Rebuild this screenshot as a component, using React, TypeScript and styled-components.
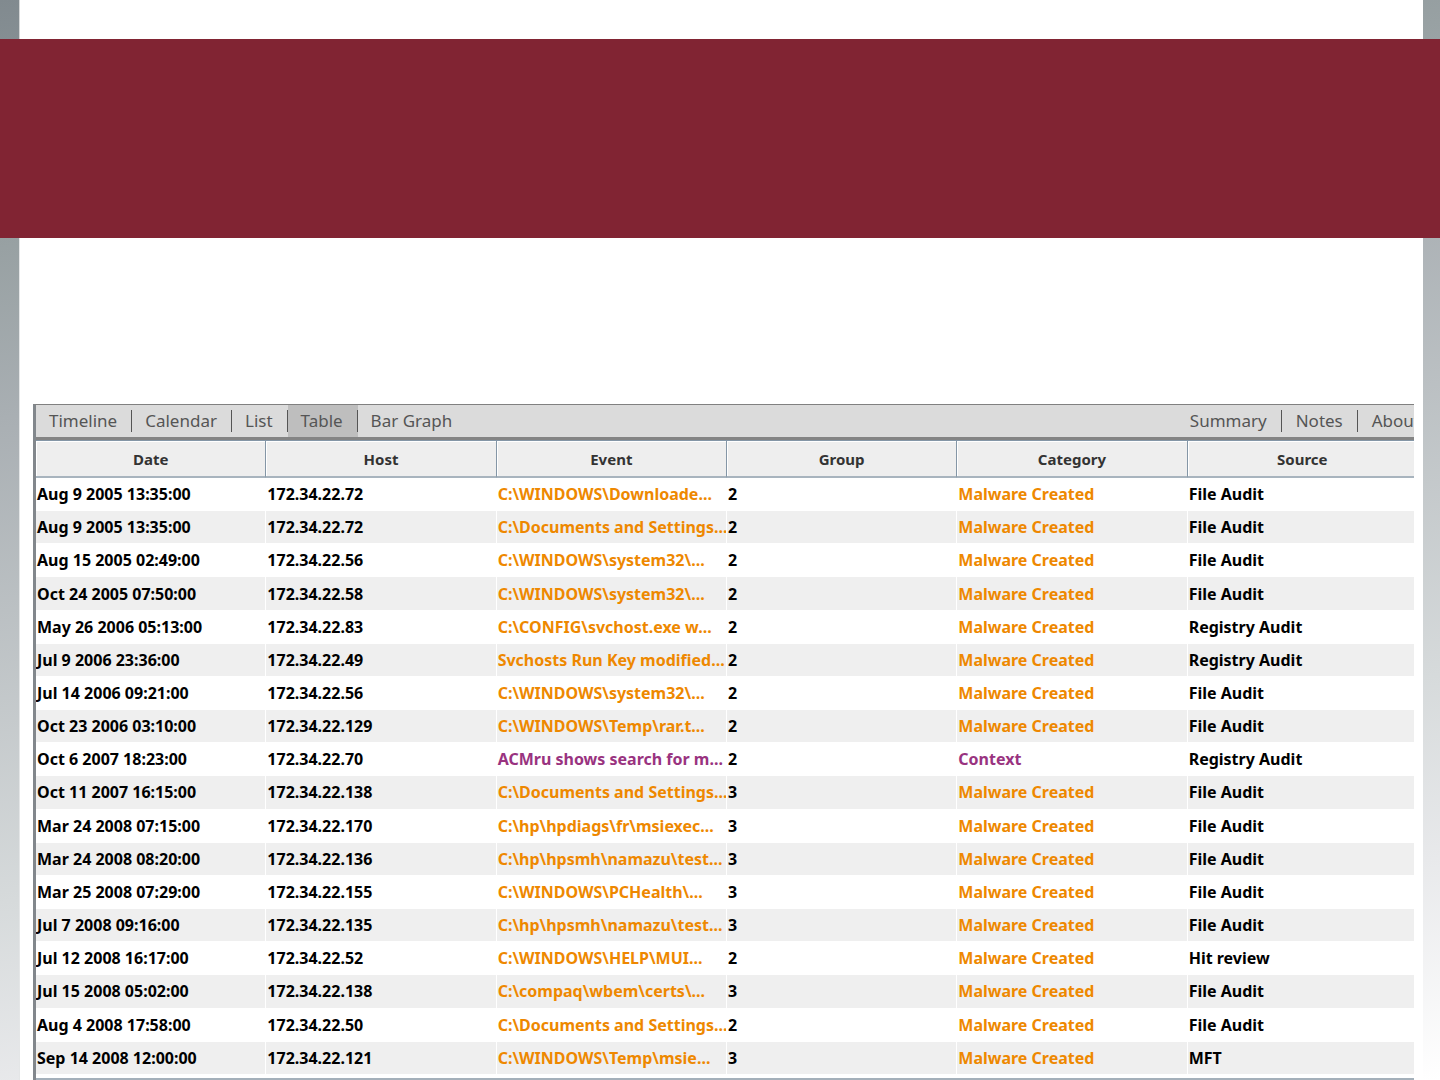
import React, { useState } from "react";
import styled, { createGlobalStyle } from "styled-components";

const GlobalStyle = createGlobalStyle`
  *, *::before, *::after { box-sizing: border-box; }
  body { margin: 0; font-family: "Noto Sans", "Open Sans", sans-serif; }
`;

const Slide = styled.div`
  display: flex;
  flex-direction: column;
  min-height: 100vh;
  background: linear-gradient(
    171deg,
    #818a8f 0%,
    #98a1a3 19%,
    #a9afb3 32%,
    #d6dadb 69%,
    #e8e9eb 83%,
    #ffffff 100%
  );
`;

const TopStrip = styled.div`
  height: 39px;
  margin: 0 17px 0 19px;
  border-left: 1px solid #d4d6d7;
  background: #fff;
`;

const Banner = styled.header`
  height: 199px;
  background: #812433;
`;

const Sheet = styled.main`
  flex: 1;
  display: flex;
  flex-direction: column;
  margin: 0 17px 0 19px;
  padding: 166px 9px 0 13px;
  border-left: 1px solid #e4e6e7;
  background: #fff;
`;

const Viewer = styled.section`
  flex: 1;
  overflow: hidden;
  border-top: 1px solid #808080;
  border-left: 3px solid #82878c;
`;

const TabBar = styled.nav`
  display: flex;
  justify-content: space-between;
  height: 35px;
  background: #dbdbdb;
  border-bottom: 3px solid #848484;
`;

const TabGroup = styled.div<{ $clipped?: boolean }>`
  display: flex;
  margin-right: ${(p) => (p.$clipped ? "-20px" : "0")};
`;

const Tab = styled.button<{ $active?: boolean; $lead: number }>`
  display: flex;
  align-items: center;
  padding: 0;
  border: 0;
  background: ${(p) => (p.$active ? "#bebebe" : "transparent")};
  color: #555;
  font: 17px/22px "Noto Sans", "Open Sans", sans-serif;
  white-space: nowrap;
  cursor: pointer;

  span {
    padding: 0 14px 0 ${(p) => p.$lead}px;
  }

  &:not(:last-child) span {
    border-right: 1px solid #555;
  }
`;

const Grid = styled.table`
  width: calc(100% + 4px);
  height: calc(100vh - 445px);
  table-layout: fixed;
  border-collapse: separate;
  border-spacing: 0;
`;

const HeadCell = styled.th`
  height: 38px;
  padding: 0;
  border-top: 1px solid #8496a6;
  border-right: 1px solid #8496a6;
  border-bottom: 2px solid #a8b4be;
  background: #eee;
  box-shadow: inset 1px 1px #fff;
  color: #333;
  font-size: 15px;
  line-height: 22px;
`;

const Row = styled.tr`
  &:nth-child(even) {
    background: #efefef;
  }
`;

const Cell = styled.td<{ $color?: string }>`
  overflow: hidden;
  padding: 0 0 0 1px;
  border-right: 1px solid #fff;
  border-bottom: 1px solid #fff;
  color: ${(p) => p.$color ?? "#000"};
  font-size: 16px;
  font-weight: 700;
  line-height: 22px;
  white-space: nowrap;
`;

const LowerEdge = styled.div`
  height: 2px;
  margin-top: 3px;
  background: #a4b0ba;
`;

const views = ["Timeline", "Calendar", "List", "Table", "Bar Graph"];
const pages = ["Summary", "Notes", "About"];
const columns = ["Date", "Host", "Event", "Group", "Category", "Source"];

const tones: Record<string, string> = {
  "Malware Created": "#ee8800",
  Context: "#993380",
};

const events = [
  ["Aug 9 2005 13:35:00", "172.34.22.72", "C:\\WINDOWS\\Downloade...", "2", "Malware Created", "File Audit"],
  ["Aug 9 2005 13:35:00", "172.34.22.72", "C:\\Documents and Settings...", "2", "Malware Created", "File Audit"],
  ["Aug 15 2005 02:49:00", "172.34.22.56", "C:\\WINDOWS\\system32\\...", "2", "Malware Created", "File Audit"],
  ["Oct 24 2005 07:50:00", "172.34.22.58", "C:\\WINDOWS\\system32\\...", "2", "Malware Created", "File Audit"],
  ["May 26 2006 05:13:00", "172.34.22.83", "C:\\CONFIG\\svchost.exe w...", "2", "Malware Created", "Registry Audit"],
  ["Jul 9 2006 23:36:00", "172.34.22.49", "Svchosts Run Key modified...", "2", "Malware Created", "Registry Audit"],
  ["Jul 14 2006 09:21:00", "172.34.22.56", "C:\\WINDOWS\\system32\\...", "2", "Malware Created", "File Audit"],
  ["Oct 23 2006 03:10:00", "172.34.22.129", "C:\\WINDOWS\\Temp\\rar.t...", "2", "Malware Created", "File Audit"],
  ["Oct 6 2007 18:23:00", "172.34.22.70", "ACMru shows search for m...", "2", "Context", "Registry Audit"],
  ["Oct 11 2007 16:15:00", "172.34.22.138", "C:\\Documents and Settings...", "3", "Malware Created", "File Audit"],
  ["Mar 24 2008 07:15:00", "172.34.22.170", "C:\\hp\\hpdiags\\fr\\msiexec...", "3", "Malware Created", "File Audit"],
  ["Mar 24 2008 08:20:00", "172.34.22.136", "C:\\hp\\hpsmh\\namazu\\test...", "3", "Malware Created", "File Audit"],
  ["Mar 25 2008 07:29:00", "172.34.22.155", "C:\\WINDOWS\\PCHealth\\...", "3", "Malware Created", "File Audit"],
  ["Jul 7 2008 09:16:00", "172.34.22.135", "C:\\hp\\hpsmh\\namazu\\test...", "3", "Malware Created", "File Audit"],
  ["Jul 12 2008 16:17:00", "172.34.22.52", "C:\\WINDOWS\\HELP\\MUI...", "2", "Malware Created", "Hit review"],
  ["Jul 15 2008 05:02:00", "172.34.22.138", "C:\\compaq\\wbem\\certs\\...", "3", "Malware Created", "File Audit"],
  ["Aug 4 2008 17:58:00", "172.34.22.50", "C:\\Documents and Settings...", "2", "Malware Created", "File Audit"],
  ["Sep 14 2008 12:00:00", "172.34.22.121", "C:\\WINDOWS\\Temp\\msie...", "3", "Malware Created", "MFT"],
];

export default function App() {
  const [view, setView] = useState("Table");

  return (
    <>
      <GlobalStyle />
      <Slide>
        <TopStrip />
        <Banner />
        <Sheet>
          <Viewer>
            <TabBar>
              <TabGroup>
                {views.map((name) => (
                  <Tab key={name} $lead={13} $active={name === view} onClick={() => setView(name)}>
                    <span>{name}</span>
                  </Tab>
                ))}
              </TabGroup>
              <TabGroup $clipped>
                {pages.map((name) => (
                  <Tab key={name} $lead={14}>
                    <span>{name}</span>
                  </Tab>
                ))}
              </TabGroup>
            </TabBar>
            <Grid>
              <thead>
                <tr>
                  {columns.map((name) => (
                    <HeadCell key={name} scope="col">{name}</HeadCell>
                  ))}
                </tr>
              </thead>
              <tbody>
                {events.map((values, i) => (
                  <Row key={i}>
                    {values.map((value, c) => (
                      <Cell key={c} $color={c === 2 || c === 4 ? tones[values[4]] : undefined}>
                        {value}
                      </Cell>
                    ))}
                  </Row>
                ))}
              </tbody>
            </Grid>
            <LowerEdge />
          </Viewer>
        </Sheet>
      </Slide>
    </>
  );
}
